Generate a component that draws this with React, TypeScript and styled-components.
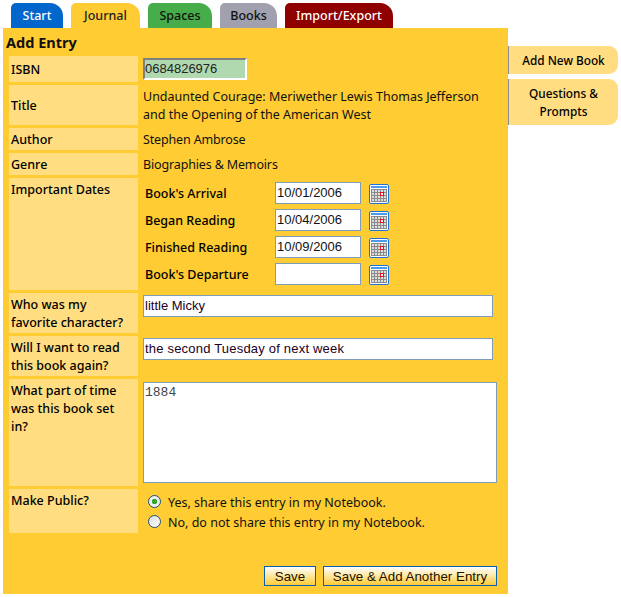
import React from "react";
import styled, { createGlobalStyle } from "styled-components";

const Global = createGlobalStyle`
  html, body { margin: 0; padding: 0; background: #fff; }
  body { font: 12.5px/18px "Noto Sans", "DejaVu Sans", sans-serif; color: #111; }
`;

const Page = styled.div`
  width: 621px;
  height: 597px;
  overflow: hidden;
`;

const TabBar = styled.div`
  display: flex;
  gap: 8px;
  height: 25px;
  padding: 3px 0 0 11px;
`;

const Tab = styled.div<{ $bg: string; $fg: string; $w: number }>`
  width: ${(p) => p.$w}px;
  height: 25px;
  background: ${(p) => p.$bg};
  color: ${(p) => p.$fg};
  border-radius: 5px 13px 0 0;
  font-size: 12.5px;
  font-weight: 500;
  line-height: 25px;
  text-align: center;
`;

const Main = styled.div`
  display: flex;
  align-items: flex-start;
  padding-left: 3px;
`;

const Panel = styled.div`
  width: 505px;
  height: 566px;
  box-sizing: border-box;
  background: #ffcc33;
  padding: 4px 11px 0 6px;
  display: flex;
  flex-direction: column;
`;

const Heading = styled.h1`
  margin: 0 0 4px -3px;
  font-size: 14.5px;
  font-weight: 700;
  line-height: 20px;
  color: #111;
`;

const Form = styled.div`
  display: grid;
  grid-template-columns: 129px 1fr;
  column-gap: 5px;
  row-gap: 3px;
`;

const Label = styled.div<{ $h: number; $center?: boolean }>`
  height: ${(p) => p.$h}px;
  box-sizing: border-box;
  background: #ffdd80;
  padding: ${(p) => (p.$center ? "1px" : "3px")} 2px 0 2px;
  display: flex;
  align-items: ${(p) => (p.$center ? "center" : "flex-start")};
  color: #000;
  font-weight: 500;
`;

const Value = styled.div<{ $center?: boolean }>`
  display: flex;
  align-items: ${(p) => (p.$center ? "center" : "flex-start")};
  min-width: 0;
`;

const Line = styled.span<{ $tight?: boolean }>`
  margin-top: 1px;
  letter-spacing: ${(p) => (p.$tight ? "-0.15px" : "0")};
`;

const fieldFont = `font: 13px "Liberation Sans", Arial, sans-serif;`;

const IsbnInput = styled.input`
  ${fieldFont}
  width: 104px;
  height: 22px;
  box-sizing: border-box;
  padding: 0 0 2px 0;
  color: #222;
  background: #b0d9b0;
  border: 2px solid;
  border-color: #808080 #fff #fff #808080;
  outline: none;
`;

const TextInput = styled.input<{ $wide?: boolean }>`
  ${fieldFont}
  width: 350px;
  height: 22px;
  box-sizing: border-box;
  margin-top: 2px;
  padding: 0 1px 2px;
  letter-spacing: ${(p) => (p.$wide ? "0.2px" : "0")};
  color: #220022;
  background: #fff;
  border: 1px solid #7f9db9;
  outline: none;
`;

const Area = styled.textarea`
  font: 13px/13px "Liberation Mono", monospace;
  width: 354px;
  height: 101px;
  box-sizing: border-box;
  margin-top: 3px;
  padding: 3px 1px;
  color: #444;
  background: #fff;
  border: 1px solid #7f9db9;
  outline: none;
  resize: none;
`;

const Dates = styled.div`
  display: flex;
  flex-direction: column;
  gap: 5px;
  padding: 4px 0 0 2px;
`;

const DateRow = styled.div`
  display: flex;
  align-items: center;
  height: 22px;
`;

const DateLabel = styled.span`
  width: 130px;
  margin-top: 2px;
  color: #000;
  font-weight: 500;
`;

const DateInput = styled.input`
  ${fieldFont}
  width: 86px;
  height: 22px;
  box-sizing: border-box;
  padding: 0 1px 2px;
  color: #111;
  background: #fff;
  border: 1px solid #7f9db9;
  outline: none;
`;

const CalendarWrap = styled.span`
  display: flex;
  margin: 2px 0 0 8px;
`;

const Choices = styled.div`
  display: flex;
  flex-direction: column;
  padding: 4px 0 0 5px;
`;

const Choice = styled.label`
  display: flex;
  align-items: center;
  height: 20px;
  gap: 7px;
  font-size: 12.5px;
`;

const Radio = styled.span<{ $on?: boolean }>`
  width: 13px;
  height: 13px;
  box-sizing: border-box;
  border-radius: 50%;
  border: 1px solid #1c5180;
  background: ${(p) =>
    p.$on
      ? "radial-gradient(circle, #2fa82f 0 2.5px, #eee 3px)"
      : "linear-gradient(135deg, #ddd, #fff)"};
  margin-top: -4px;
`;

const Actions = styled.div`
  display: flex;
  justify-content: flex-end;
  gap: 7px;
  margin-top: 33px;
`;

const Button = styled.button<{ $w: number }>`
  font: 13.35px "Liberation Sans", Arial, sans-serif;
  width: ${(p) => p.$w}px;
  height: 20px;
  padding: 0;
  color: #221100;
  border: 1px solid #0a5fb4;
  background: linear-gradient(#fff 0%, #ffe9a8 45%, #ffcc33 100%);
`;

const Side = styled.div`
  display: flex;
  flex-direction: column;
  gap: 5px;
  padding-top: 18px;
`;

const SideTab = styled.div`
  width: 110px;
  box-sizing: border-box;
  padding: 5px 8px;
  background: #ffdd80;
  border-left: 1px solid #8a8a90;
  border-radius: 0 9px 9px 0;
  text-align: center;
  color: #000;
  font-size: 11.8px;
  font-weight: 500;
  line-height: 18px;
`;

function Calendar() {
  return (
    <svg width="20" height="20" viewBox="0 0 20 20">
      <rect x="0.5" y="0.5" width="19" height="19" rx="1.5" fill="#fff" stroke="#1a73d8" />
      <rect x="2" y="2" width="16" height="2" fill="#4a9bee" />
      <rect x="2" y="5" width="16" height="13" fill="#8a8a8a" />
      {[0, 1, 2, 3].map((r) =>
        [0, 1, 2, 3, 4].map((c) => (
          <rect key={`${r}-${c}`} x={3 + c * 3} y={6 + r * 3} width="2" height="2" fill="#ddd" />
        ))
      )}
      <rect x="11.5" y="8.5" width="3" height="3" fill="#fff" stroke="#e8101c" />
    </svg>
  );
}

const tabs = [
  { name: "Start", w: 52, bg: "#0066cc", fg: "#fff" },
  { name: "Journal", w: 69, bg: "#ffcc33", fg: "#222" },
  { name: "Spaces", w: 64, bg: "#47ad4a", fg: "#111" },
  { name: "Books", w: 57, bg: "#a0a0ae", fg: "#111" },
  { name: "Import/Export", w: 108, bg: "#8f0000", fg: "#fff" },
];

const dates = [
  ["Book's Arrival", "10/01/2006"],
  ["Began Reading", "10/04/2006"],
  ["Finished Reading", "10/09/2006"],
  ["Book's Departure", ""],
];

export default function App() {
  return (
    <Page>
      <Global />
      <TabBar>
        {tabs.map((t) => (
          <Tab key={t.name} $bg={t.bg} $fg={t.fg} $w={t.w}>{t.name}</Tab>
        ))}
      </TabBar>
      <Main>
        <Panel>
          <Heading>Add Entry</Heading>
          <Form>
            <Label $h={26} $center>ISBN</Label>
            <Value $center><IsbnInput readOnly value="0684826976" /></Value>

            <Label $h={40} $center>Title</Label>
            <Value $center>
              <Line>Undaunted Courage: Meriwether Lewis Thomas Jefferson<br />and the Opening of the American West</Line>
            </Value>

            <Label $h={22} $center>Author</Label>
            <Value $center><Line $tight>Stephen Ambrose</Line></Value>

            <Label $h={22} $center>Genre</Label>
            <Value $center><Line $tight>Biographies &amp; Memoirs</Line></Value>

            <Label $h={112}>Important Dates</Label>
            <Dates>
              {dates.map(([label, value]) => (
                <DateRow key={label}>
                  <DateLabel>{label}</DateLabel>
                  <DateInput readOnly value={value} />
                  <CalendarWrap><Calendar /></CalendarWrap>
                </DateRow>
              ))}
            </Dates>

            <Label $h={40}><span>Who was my<br />favorite character?</span></Label>
            <Value><TextInput readOnly value="little Micky" /></Value>

            <Label $h={40}><span>Will I want to read<br />this book again?</span></Label>
            <Value><TextInput $wide readOnly value="the second Tuesday of next week" /></Value>

            <Label $h={107}><span>What part of time<br />was this book set<br />in?</span></Label>
            <Value><Area readOnly value="1884" /></Value>

            <Label $h={44}>Make Public?</Label>
            <Choices>
              <Choice><Radio $on />Yes, share this entry in my Notebook.</Choice>
              <Choice><Radio />No, do not share this entry in my Notebook.</Choice>
            </Choices>
          </Form>
          <Actions>
            <Button $w={52}>Save</Button>
            <Button $w={174}>Save &amp; Add Another Entry</Button>
          </Actions>
        </Panel>
        <Side>
          <SideTab>Add New Book</SideTab>
          <SideTab>Questions &amp; Prompts</SideTab>
        </Side>
      </Main>
    </Page>
  );
}
